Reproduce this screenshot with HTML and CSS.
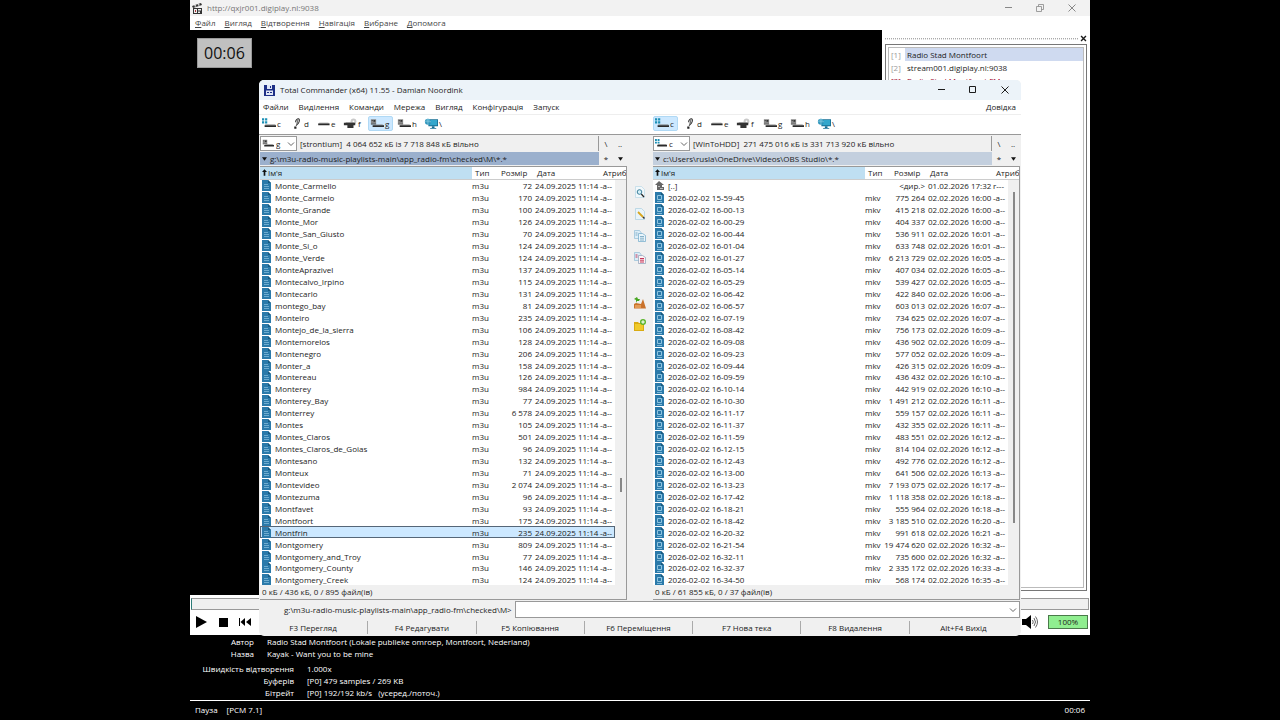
FILE: index.html
```html
<!DOCTYPE html>
<html lang="uk">
<head>
	<meta charset="utf-8">
	<meta name="viewport" content="width=device-width, initial-scale=1">
	<title>Total Commander</title>
	<link rel="stylesheet" href="styles.css">
</head>
<body>

<!-- icons -->
<svg class="defs" aria-hidden="true">
	<symbol id="i-win" viewBox="0 0 16 12">
		<path fill="#1b8fb5" d="M0 0h2.500v2.500H0zM3.500 0H6v2.500H3.500zM0 3.500h2.500V6H0zM3.500 3.500H6V6H3.500z"/>
		<path fill="#777" d="M4 7h11l1 1H3z"/><path fill="#2a2a2a" d="M3 8h13v2H3z"/>
	</symbol>
	<symbol id="i-unknown" viewBox="0 0 16 12">
		<path fill="none" stroke="#333" stroke-width="1.200" d="M7.500 4.500C7.500 2 9.500.5 11 .7s1 3-.2 4.800L8 8.500"/>
		<path fill="#777" d="M9 2.500l2-1.500-1 5-2 2z"/><path fill="#222" d="M6 9.500h2.500V12H6z"/>
	</symbol>
	<symbol id="i-disk" viewBox="0 0 16 12">
		<path fill="#888" d="M4 5h10l1.500 1H2.500z"/><path fill="#2a2a2a" d="M2.500 6h13v2h-13z"/>
	</symbol>
	<symbol id="i-cd" viewBox="0 0 16 12">
		<circle cx="12" cy="3.500" r="3.300" fill="#c9c9c9"/><circle cx="12" cy="3.500" r="1" fill="#fff"/>
		<path fill="#333" d="M1 5h13v3h-2v3H5V8H1z"/><path fill="#888" d="M3 4.500h9v1H3z"/>
	</symbol>
	<symbol id="i-card" viewBox="0 0 16 12">
		<path fill="#888" d="M1 1h6v5H1z"/><path fill="#333" d="M2 2h1v1H2zM4 2h2v2H4zM1 6h6v1H1z"/>
		<path fill="#888" d="M5 7h9l2 1H4z"/><path fill="#2a2a2a" d="M3 8h13v2H3z"/>
	</symbol>
	<symbol id="i-net" viewBox="0 0 16 12">
		<path fill="#176f95" d="M5 1h11v8H5z"/><path fill="#34a7cc" d="M6 2h9v6H6z"/>
		<circle cx="4.500" cy="4" r="3.500" fill="#2d93ba"/><path stroke="#9bd8ea" stroke-width=".7" fill="none" d="M1 4h7M4.500.5v7M2 2h5"/>
		<path fill="#176f95" d="M9 9h3v2h2v1H7v-1h2z"/>
	</symbol>
	<symbol id="i-file" viewBox="0 0 9 11">
		<path fill="#2b7aaa" d="M0 0h6l3 3v8H0z"/><path fill="#17597f" d="M6 0l3 3H6z"/>
		<path fill="#6fadd0" d="M2 4h4v1H2zM2 6h5v1H2zM2 8h5v1H2z"/>
	</symbol>
	<symbol id="i-video" viewBox="0 0 9 11">
		<path fill="#2b7aaa" d="M0 0h6l3 3v8H0z"/><path fill="#17597f" d="M6 0l3 3H6z"/>
		<path fill="none" stroke="#8fc4e0" d="M2.500 3.500h4v4h-4z"/><path stroke="#7db8d8" d="M2 9.500h5"/>
	</symbol>
	<symbol id="i-up" viewBox="0 0 9 11">
		<path fill="#666" d="M4 1l5 4H7v2h2v3H2V5H0z"/><path fill="#bbb" d="M5 8h3v1H5zM3 6h2v1H3z"/>
	</symbol>
	<symbol id="i-view" viewBox="0 0 12 12">
		<path fill="#f2f8fb" stroke="#b9d9e6" stroke-width=".7" d="M1.500.5h6l3 3v8h-9z"/>
		<circle cx="5.500" cy="6" r="2.300" fill="#d5f0f8" stroke="#28708e" stroke-width=".9"/><path stroke="#222" stroke-width="1.200" d="M7.300 8l2.700 3"/>
	</symbol>
	<symbol id="i-edit" viewBox="0 0 12 12">
		<path fill="#e9f4fa" stroke="#a9cfe0" stroke-width=".7" d="M1.500.5h6l3 3v8h-9z"/>
		<path stroke="#d8a51d" stroke-width="1.800" d="M4 4l5 5"/><path stroke="#333" stroke-width="1.500" d="M9 9l1.500 1.500"/>
	</symbol>
	<symbol id="i-copy" viewBox="0 0 12 12">
		<path fill="#dcedf7" stroke="#8fbcd6" stroke-width=".7" d="M.5.5h5l1.500 2v6H.5z"/>
		<path fill="#eaf5fb" stroke="#6fa8c8" stroke-width=".7" d="M4.500 3.500h4l3 2v6h-7z"/>
		<path stroke="#6c9fbd" stroke-width=".8" d="M1.500 3h2M1.500 5h2M6 6.500h4M6 8.200h4M6 10h4"/>
	</symbol>
	<symbol id="i-move" viewBox="0 0 12 12">
		<path fill="#dcedf7" stroke="#8fbcd6" stroke-width=".7" d="M.5.5h5l1.500 2v6H.5z"/>
		<path fill="#fdf3f5" stroke="#8b9fb8" stroke-width=".7" d="M4.500 3.500h4l3 2v6h-7z"/>
		<path stroke="#c02048" stroke-width=".9" d="M1.500 3h2M1.500 5h2M6 6.500h4M6 8.200h4M6 10h4"/>
	</symbol>
	<symbol id="i-pack" viewBox="0 0 12 12">
		<path fill="#c9722b" d="M0 7l2-1 5 1 2-5 3 9.500H0z"/><path fill="#e29a55" d="M1 8h6v3H1z"/>
		<path fill="#46a51f" d="M3 0l1 2h2L5 4H3L2 6V3L0 2z"/>
	</symbol>
	<symbol id="i-newdir" viewBox="0 0 12 12">
		<path fill="#d9ab12" d="M0 3h4l1 1h5v8H0z"/><path fill="#f0ca2a" d="M1 5h8v6H1z"/>
		<circle cx="9" cy="3" r="3" fill="#5ab52b"/><path stroke="#fff" stroke-width="1.100" d="M7.200 3h3.600M9 1.200v3.600"/>
	</symbol>
	<symbol id="i-min" viewBox="0 0 10 10"><path stroke="currentColor" d="M2 4.500h7"/></symbol>
	<symbol id="i-max" viewBox="0 0 10 10"><path fill="none" stroke="currentColor" d="M1.500 1.500h6v6h-6z"/></symbol>
	<symbol id="i-restore" viewBox="0 0 10 10"><path fill="none" stroke="currentColor" stroke-width=".8" d="M1.500 3.500h5v5h-5zM3.500 3.500v-2h5v5h-2"/></symbol>
	<symbol id="i-close" viewBox="0 0 10 10"><path stroke="currentColor" d="M1.500 1.500l7 7M8.500 1.500l-7 7"/></symbol>
	<symbol id="i-chev" viewBox="0 0 8 6"><path fill="none" stroke="#555" stroke-width=".9" d="M1 1.500l3 3 3-3"/></symbol>
	<symbol id="i-tri" viewBox="0 0 6 4"><path fill="#111" d="M0 0h6L3 4z"/></symbol>
	<symbol id="i-sort" viewBox="0 0 6 8"><path fill="#111" d="M3 0l3 3.500H4V8H2V3.500H0z"/></symbol>
</svg>

<div class="player">
	<header class="player-title">
		<svg class="player-logo" viewBox="0 0 11 11"><path fill="#333" d="M0 3l9-3 1 2-9 3zM1 5h9v6H1z"/><path fill="#eee" d="M2 2.500l1.500-.5 1 1.200L3 3.700zM5.500 1.500L7 1l1 1.200-1.500.5zM2 6h3v4H2zM6 6h3v1.500H6zM6 8.500h2V10H6z"/><path fill="#a33" d="M3 7h1v2H3z"/></svg>
		<span class="player-name">http://qxjr001.digiplay.nl:9038</span>
		<div class="win-buttons dim">
			<button aria-label="Згорнути"><svg><use href="#i-min"/></svg></button>
			<button aria-label="Відновити"><svg><use href="#i-restore"/></svg></button>
			<button aria-label="Закрити"><svg><use href="#i-close"/></svg></button>
		</div>
	</header>
	<nav class="player-menu">
		<a href="#"><u>Ф</u>айл</a>
		<a href="#"><u>В</u>игляд</a>
		<a href="#"><u>В</u>ідтворення</a>
		<a href="#"><u>Н</u>авігація</a>
		<a href="#"><u>В</u>ибране</a>
		<a href="#"><u>Д</u>опомога</a>
	</nav>

	<div class="stage">
		<div class="video"><span class="osd">00:06</span></div>
		<aside class="playlist">
			<div class="grip"><i></i><button aria-label="Закрити список"><svg><use href="#i-close"/></svg></button></div>
			<ol class="tracks">
				<li class="current"><span>[1]</span><b>Radio Stad Montfoort</b></li>
				<li><span>[2]</span><b>stream001.digiplay.nl:9038</b></li>
				<li class="bad"><span>[3]</span><b>Radio Stad Montfoort FM</b></li>
			</ol>
		</aside>
	</div>

	<div class="seek"><div class="seek-track"></div></div>
	<div class="controls">
		<button aria-label="Відтворити"><svg viewBox="0 0 12 12"><path d="M1 0l11 6-11 6z"/></svg></button>
		<button aria-label="Зупинити"><svg viewBox="0 0 12 12"><path d="M2 2h9v9H2z"/></svg></button>
		<button aria-label="Попередній"><svg viewBox="0 0 12 12"><path d="M0 2h1v8H0zM6 2v8L1.500 6zM12 2v8L7 6z"/></svg></button>
		<button class="mute" aria-label="Гучність"><svg viewBox="0 0 16 14"><path d="M0 4h4l5-4v14L4 10H0z"/><path fill="none" stroke="#555" stroke-width=".9" d="M10.500 5q1.500 2 0 4M12 3q3 4 0 8M13.500 1.500q4 5.500 0 11"/></svg></button>
		<span class="volume">100%</span>
	</div>

	<div class="info">
		<dl class="tags">
			<dt>Автор</dt><dd>Radio Stad Montfoort (Lokale publieke omroep, Montfoort, Nederland)</dd>
			<dt>Назва</dt><dd>Kayak - Want you to be mine</dd>
		</dl>
		<dl class="stats">
			<dt>Швидкість відтворення</dt><dd>1.000x</dd>
			<dt>Буферів</dt><dd>[P0] 479 samples / 269 KB</dd>
			<dt>Бітрейт</dt><dd>[P0] 192/192 kb/s &nbsp; (усеред./поточ.)</dd>
		</dl>
	</div>
	<footer class="player-status"><span>Пауза</span><span>[PCM 7.1]</span><span class="time">00:06</span></footer>

	<!-- file manager window on top of the player -->
	<main class="commander">
		<header class="tc-title">
			<svg class="tc-logo" viewBox="0 0 11 11"><path fill="#1d2f86" d="M0 0h11v11H0z"/><path fill="#dfe6f5" d="M3 0h5v4H3zM2 5.500h7V10H2z"/><path fill="#1d2f86" d="M6 1h1v2H6zM3 7h2v1H3zM6 7h2v1H6z"/></svg>
			<span>Total Commander (x64) 11.55 - Damian Noordink</span>
			<div class="win-buttons">
				<button aria-label="Згорнути"><svg><use href="#i-min"/></svg></button>
				<button aria-label="Розгорнути"><svg><use href="#i-max"/></svg></button>
				<button aria-label="Закрити"><svg><use href="#i-close"/></svg></button>
			</div>
		</header>
		<nav class="tc-menu">
			<a href="#">Файли</a>
			<a href="#">Виділення</a>
			<a href="#">Команди</a>
			<a href="#">Мережа</a>
			<a href="#">Вигляд</a>
			<a href="#">Конфігурація</a>
			<a href="#">Запуск</a>
			<a href="#" class="help">Довідка</a>
		</nav>

		<div class="drives">
			<div class="drive-bar">
				<button><svg><use href="#i-win"/></svg>c</button>
				<button><svg><use href="#i-unknown"/></svg>d</button>
				<button><svg><use href="#i-disk"/></svg>e</button>
				<button><svg><use href="#i-cd"/></svg>f</button>
				<button class="on"><svg><use href="#i-card"/></svg>g</button>
				<button><svg><use href="#i-card"/></svg>h</button>
				<button><svg><use href="#i-net"/></svg>\</button>
			</div>
			<div class="drive-bar">
				<button class="on"><svg><use href="#i-win"/></svg>c</button>
				<button><svg><use href="#i-unknown"/></svg>d</button>
				<button><svg><use href="#i-disk"/></svg>e</button>
				<button><svg><use href="#i-cd"/></svg>f</button>
				<button><svg><use href="#i-card"/></svg>g</button>
				<button><svg><use href="#i-card"/></svg>h</button>
				<button><svg><use href="#i-net"/></svg>\</button>
			</div>
		</div>

		<div class="panels">
			<section class="panel active">
				<div class="drive-row">
					<label class="drive-select"><svg class="drive-icon"><use href="#i-card"/></svg><select aria-label="Диск"><option>g</option></select><svg class="chev"><use href="#i-chev"/></svg></label>
					<span class="free">[strontium]&nbsp; 4 064 652 кБ із 7 718 848 кБ вільно</span>
					<button>\</button><button>..</button>
				</div>
				<div class="path-row">
					<div class="path"><svg><use href="#i-tri"/></svg>g:\m3u-radio-music-playlists-main\app_radio-fm\checked\M\*.*</div>
					<button>*</button><button aria-label="Історія"><svg><use href="#i-tri"/></svg></button>
				</div>
				<div class="list">
					<table>
						<colgroup><col><col class="c-type"><col class="c-size"><col class="c-date"><col class="c-attr"><col class="c-bar"></colgroup>
						<thead><tr><th class="sorted"><svg><use href="#i-sort"/></svg>Ім'я</th><th>Тип</th><th>Розмір</th><th>Дата</th><th colspan="2">Атриб</th></tr></thead>
						<tbody id="left"></tbody>
					</table>
				</div>
				<div class="summary">0 кБ / 436 кБ, 0 / 895 файл(ів)</div>
			</section>

			<div class="tools">
				<button aria-label="Перегляд"><svg><use href="#i-view"/></svg></button>
				<button aria-label="Редагувати"><svg><use href="#i-edit"/></svg></button>
				<button aria-label="Копіювати"><svg><use href="#i-copy"/></svg></button>
				<button aria-label="Перемістити"><svg><use href="#i-move"/></svg></button>
				<button class="gap" aria-label="Запакувати"><svg><use href="#i-pack"/></svg></button>
				<button aria-label="Нова тека"><svg><use href="#i-newdir"/></svg></button>
			</div>

			<section class="panel">
				<div class="drive-row">
					<label class="drive-select"><svg class="drive-icon"><use href="#i-win"/></svg><select aria-label="Диск"><option>c</option></select><svg class="chev"><use href="#i-chev"/></svg></label>
					<span class="free">[WinToHDD]&nbsp; 271 475 016 кБ із 331 713 920 кБ вільно</span>
					<button>\</button><button>..</button>
				</div>
				<div class="path-row">
					<div class="path"><svg><use href="#i-tri"/></svg>c:\Users\rusla\OneDrive\Videos\OBS Studio\*.*</div>
					<button>*</button><button aria-label="Історія"><svg><use href="#i-tri"/></svg></button>
				</div>
				<div class="list">
					<table>
						<colgroup><col><col class="c-type"><col class="c-size"><col class="c-date"><col class="c-attr"><col class="c-bar"></colgroup>
						<thead><tr><th class="sorted"><svg><use href="#i-sort"/></svg>Ім'я</th><th>Тип</th><th>Розмір</th><th>Дата</th><th colspan="2">Атриб</th></tr></thead>
						<tbody id="right"></tbody>
					</table>
				</div>
				<div class="summary">0 кБ / 61 855 кБ, 0 / 37 файл(ів)</div>
			</section>
		</div>

		<div class="command">
			<label for="cmd">g:\m3u-radio-music-playlists-main\app_radio-fm\checked\M&gt;</label>
			<div class="command-box"><input id="cmd" type="text"><button aria-label="Історія команд"><svg><use href="#i-chev"/></svg></button></div>
		</div>
		<div class="fkeys">
			<button>F3 Перегляд</button>
			<button>F4 Редагувати</button>
			<button>F5 Копіювання</button>
			<button>F6 Переміщення</button>
			<button>F7 Нова тека</button>
			<button>F8 Видалення</button>
			<button>Alt+F4 Вихід</button>
		</div>
	</main>
</div>

<script src="files.js"></script>
</body>
</html>
```
FILE: files.js
```js
// name, size
var left = [
	["Monte_Carmello", "72"], ["Monte_Carmelo", "170"], ["Monte_Grande", "100"], ["Monte_Mor", "126"],
	["Monte_San_Giusto", "70"], ["Monte_Si_o", "124"], ["Monte_Verde", "124"], ["MonteAprazivel", "137"],
	["Montecalvo_Irpino", "115"], ["Montecarlo", "131"], ["montego_bay", "81"], ["Monteiro", "235"],
	["Montejo_de_la_sierra", "106"], ["Montemorelos", "128"], ["Montenegro", "206"], ["Monter_a", "158"],
	["Montereau", "126"], ["Monterey", "984"], ["Monterey_Bay", "77"], ["Monterrey", "6 578"],
	["Montes", "105"], ["Montes_Claros", "501"], ["Montes_Claros_de_Goias", "96"], ["Montesano", "132"],
	["Monteux", "71"], ["Montevideo", "2 074"], ["Montezuma", "96"], ["Montfavet", "93"],
	["Montfoort", "175"], ["Montfrin", "235"], ["Montgomery", "809"], ["Montgomery_and_Troy", "77"],
	["Montgomery_County", "146"], ["Montgomery_Creek", "124"]
];

// start time, size, time the file was closed
var right = [
	["15-59-45", "775 264", "16:00"], ["16-00-13", "415 218", "16:00"], ["16-00-29", "404 337", "16:00"],
	["16-00-44", "536 911", "16:01"], ["16-01-04", "633 748", "16:01"], ["16-01-27", "6 213 729", "16:05"],
	["16-05-14", "407 034", "16:05"], ["16-05-29", "539 427", "16:05"], ["16-06-42", "422 840", "16:06"],
	["16-06-57", "603 013", "16:07"], ["16-07-19", "734 625", "16:07"], ["16-08-42", "756 173", "16:09"],
	["16-09-08", "436 902", "16:09"], ["16-09-23", "577 052", "16:09"], ["16-09-44", "426 315", "16:09"],
	["16-09-59", "436 432", "16:10"], ["16-10-14", "442 919", "16:10"], ["16-10-30", "1 491 212", "16:11"],
	["16-11-17", "559 157", "16:11"], ["16-11-37", "432 355", "16:11"], ["16-11-59", "483 551", "16:12"],
	["16-12-15", "814 104", "16:12"], ["16-12-43", "492 776", "16:12"], ["16-13-00", "641 506", "16:13"],
	["16-13-23", "7 193 075", "16:17"], ["16-17-42", "1 118 358", "16:18"], ["16-18-21", "555 964", "16:18"],
	["16-18-42", "3 185 510", "16:20"], ["16-20-32", "991 618", "16:21"], ["16-21-54", "19 474 620", "16:32"],
	["16-32-11", "735 600", "16:32"], ["16-32-37", "2 335 172", "16:33"], ["16-34-50", "568 174", "16:35"]
];

function row(icon, name, type, size, date, attr) {
	return '<td><svg><use href="#' + icon + '"/></svg>' + name + '</td><td>' + type + '</td><td>' +
		size + '</td><td>' + date + '</td><td>' + attr + '</td>';
}

function fill(id, rows, selected) {
	document.getElementById(id).innerHTML = rows.map(function (cells, i) {
		var bar = i == 0 ? '<td class="bar" rowspan="' + rows.length + '"><i></i></td>' : '';
		return '<tr' + (i == selected ? ' class="selected"' : '') + '>' + cells + bar + '</tr>';
	}).join('');
}

fill('left', left.map(function (f) {
	return row('i-file', f[0], 'm3u', f[1], '24.09.2025 11:14', '-a--');
}), 29);

fill('right', [row('i-up', '[..]', '', '&lt;дир.&gt;', '01.02.2026 17:32', 'r---')].concat(right.map(function (f) {
	return row('i-video', '2026-02-02 ' + f[0], 'mkv', f[1], '02.02.2026 ' + f[2], '-a--');
})), -1);
```
FILE: styles.css
```css
* {
	box-sizing: border-box;
}

body {
	margin: 0;
	padding: 0 190px;
	background: #000;
	color: #1c1c1c;
	font: 8px/12px "Open Sans", "Noto Sans", sans-serif;
}

button, input, select {
	margin: 0;
	padding: 0;
	border: 0;
	background: none;
	color: inherit;
	font: inherit;
}

a {
	color: inherit;
	text-decoration: none;
}

svg {
	display: block;
	flex: none;
}

.defs {
	display: none;
}

/* player */
.player {
	position: relative;
	display: flex;
	flex-direction: column;
	min-height: 100vh;
	background: #fff;
}

.player-title {
	display: flex;
	align-items: center;
	gap: 4px;
	height: 16px;
	padding-left: 2px;
	background: #f2f2f2;
	color: #777;
}

.player-logo, .tc-logo {
	width: 11px;
	height: 11px;
}

.win-buttons {
	display: flex;
	margin-left: auto;
}

.win-buttons button {
	display: grid;
	place-items: center;
	width: 32px;
	height: 16px;
}

.win-buttons svg {
	width: 10px;
	height: 10px;
}

.dim {
	color: #888;
	padding-right: 2px;
}

.player-menu {
	display: flex;
	align-items: center;
	gap: 9px;
	height: 14px;
	padding-left: 5px;
	color: #444;
}

.stage {
	flex: 1;
	display: flex;
}

.video {
	flex: 1;
	padding: 8px 7px;
	background: #000;
}

.osd {
	display: inline-block;
	padding: 0 6px;
	border: 1px solid #999;
	background: #c0c0c0;
	color: #111;
	font-size: 16px;
	line-height: 28px;
}

.playlist {
	display: flex;
	flex-direction: column;
	width: 208px;
	padding: 3px 3px 4px;
}

.grip {
	display: flex;
	align-items: center;
	gap: 2px;
	height: 11px;
}

.grip i {
	flex: 1;
	height: 2px;
	border-top: 1px dotted #aaa;
	border-bottom: 1px dotted #ddd;
}

.grip svg {
	width: 7px;
	height: 7px;
	stroke-width: 2;
}

.tracks {
	flex: 1;
	margin: 0;
	padding: 3px;
	border: 1px solid #777;
	outline: 1px solid #bbb;
	outline-offset: -4px;
	list-style: none;
}

.tracks li {
	display: flex;
	line-height: 13px;
}

.tracks span {
	width: 16px;
	padding-left: 2px;
	color: #999;
}

.tracks b {
	flex: 1;
	padding-left: 2px;
	font-weight: 400;
}

.tracks .current b {
	background: #cfdaf0;
}

.tracks .bad, .tracks .bad span {
	color: #a00028;
}

.seek {
	padding: 3px 1px 0;
}

.seek-track {
	height: 12px;
	border: 1px solid #999;
	border-left-color: #2c7c78;
	background: #f0f0f0;
}

.controls {
	display: flex;
	align-items: center;
	gap: 10px;
	height: 25px;
	padding: 0 2px 2px 5px;
}

.controls svg {
	width: 12px;
	height: 12px;
}

.controls .mute {
	margin-left: auto;
}

.controls .mute svg {
	width: 16px;
	height: 14px;
}

.volume {
	width: 40px;
	border: 1px solid #4a7a4a;
	background: #90ee90;
	text-align: center;
}

.info {
	height: 65px;
	padding-top: 1px;
	background: #000;
	color: #fff;
}

.info dl {
	display: grid;
	grid-template-columns: 64px 1fr;
	column-gap: 13px;
	margin: 0 0 3px;
}

.info .stats {
	grid-template-columns: 104px 1fr;
}

.info dt {
	text-align: right;
}

.info dd {
	margin: 0;
}

.player-status {
	display: flex;
	align-items: center;
	gap: 9px;
	height: 20px;
	padding: 0 5px 2px;
	border-top: 1px solid #fff;
	background: #000;
	color: #fff;
}

.time {
	margin-left: auto;
}

/* file manager */
.commander {
	position: absolute;
	top: 80px;
	left: 69px;
	right: 69px;
	display: flex;
	flex-direction: column;
	overflow: hidden;
	border-radius: 5px;
	background: #f0f0f0;
}

.tc-title {
	display: flex;
	align-items: center;
	gap: 5px;
	height: 20px;
	padding-left: 5px;
	background: #ecf3f9;
}

.tc-menu {
	display: flex;
	align-items: center;
	gap: 10px;
	height: 14px;
	padding: 0 5px 0 4px;
	background: #fff;
}

.help {
	margin-left: auto;
}

.drives {
	height: 21px;
	padding-bottom: 2px;
	border-top: 1px solid #eee;
	border-bottom: 1px solid #999;
	background: #fff;
}

.drives, .panels {
	display: grid;
	grid-template-columns: 1fr 26px 1fr;
	padding-left: 1px;
	padding-right: 1px;
}

.drive-bar:last-child {
	grid-column: 3;
}

.drive-bar {
	display: flex;
	align-items: center;
	gap: 2px;
}

.drive-bar button {
	display: flex;
	align-items: center;
	gap: 1px;
	width: 25px;
	height: 15px;
	padding-left: 1px;
	border: 1px solid transparent;
	border-radius: 2px;
}

.drive-bar .on {
	border-color: #b0d9f5;
	background: #cce8ff;
}

.drive-bar svg {
	width: 14px;
	height: 11px;
}

.drive-row, .path-row {
	display: flex;
	align-items: stretch;
}

.drive-row {
	height: 17px;
	padding: 1px 0;
	line-height: 15px;
}

.drive-row > button, .path-row > button {
	display: grid;
	place-items: center;
	width: 14px;
}

.drive-select {
	display: flex;
	align-items: center;
	width: 37px;
	padding: 0 1px;
	border: 1px solid #999;
	background: #fff;
}

.drive-select select {
	flex: 1;
	min-width: 0;
	padding-left: 2px;
	appearance: none;
}

.drive-icon {
	width: 12px;
	height: 9px;
}

.chev, .command-box svg {
	width: 8px;
	height: 6px;
}

.free {
	flex: 1;
	padding-left: 3px;
	border-right: 1px solid #999;
	white-space: nowrap;
}

.path-row {
	height: 14px;
	padding-bottom: 1px;
}

.path {
	flex: 1;
	display: flex;
	align-items: center;
	gap: 3px;
	padding-left: 2px;
	background: #c3cfde;
	white-space: nowrap;
}

.active .path {
	background: #9bb0cd;
}

.path-row svg {
	width: 5px;
	height: 4px;
}

.list {
	height: 419px;
	overflow: hidden;
	border: solid #999;
	border-width: 1px 1px 0 0;
	background: #fff;
}

.list table {
	width: 100%;
	height: 419px;
	border-spacing: 0;
	table-layout: fixed;
	line-height: 11px;
}

.c-type { width: 19px; }
.c-size { width: 43px; }
.c-date { width: 66px; }
.c-attr { width: 15px; }
.c-bar { width: 11px; }

.list th {
	height: 13px;
	padding: 0 0 1px 3px;
	border-bottom: 1px solid #ccc;
	font-weight: 400;
	text-align: left;
	vertical-align: top;
	white-space: nowrap;
}

.list th:nth-child(3) {
	padding-left: 10px;
}

.list .sorted {
	padding-left: 2px;
	background: #bfdff2;
}

.list th svg {
	display: inline-block;
	width: 5px;
	height: 7px;
	margin-right: 1px;
}

.list td {
	padding: 0;
	white-space: nowrap;
}

.list td:first-child {
	padding-left: 2px;
}

.list td svg {
	display: inline-block;
	width: 9px;
	height: 11px;
	margin-right: 4px;
	vertical-align: top;
}

.list td:nth-child(3) {
	padding-right: 2px;
	text-align: right;
}

.list td:nth-child(4) {
	padding-left: 1px;
}

.selected td {
	background: #cce8ff;
	box-shadow: inset 0 1px #567, inset 0 -1px #567;
}

.selected td:first-child {
	box-shadow: inset 1px 1px #567, inset 0 -1px #567;
}

.selected td:last-child {
	box-shadow: inset -1px 1px #567, inset 0 -1px #567;
}

.list .bar {
	background: #f0f0f0;
	vertical-align: top;
}

.bar i {
	display: block;
	width: 2px;
	height: 331px;
	margin: 12px auto 0;
	background: #888;
}

.active .bar i {
	height: 14px;
	margin-top: 298px;
}

.summary {
	height: 15px;
	padding-left: 2px;
	border: solid #999;
	border-width: 0 1px 1px 0;
	line-height: 14px;
}

.tools {
	display: flex;
	flex-direction: column;
	align-items: center;
	padding-top: 46px;
}

.tools button {
	display: grid;
	place-items: center;
	width: 22px;
	height: 22px;
}

.tools .gap {
	margin-top: 23px;
}

.tools svg {
	width: 12px;
	height: 12px;
}

.command {
	display: grid;
	grid-template-columns: 1fr 2fr;
	align-items: center;
	gap: 3px;
	height: 19px;
	padding: 1px 1px 1px 0;
	text-align: right;
	white-space: nowrap;
}

.command-box {
	display: flex;
	align-items: center;
	height: 17px;
	padding-right: 2px;
	border: 1px solid #999;
	background: #fff;
}

.command-box input {
	flex: 1;
	min-width: 0;
}

.fkeys {
	display: grid;
	grid-template-columns: repeat(7, 1fr);
	height: 17px;
	padding: 2px 4px 2px 0;
}

.fkeys button + button {
	border-left: 1px solid #aaa;
}
```
